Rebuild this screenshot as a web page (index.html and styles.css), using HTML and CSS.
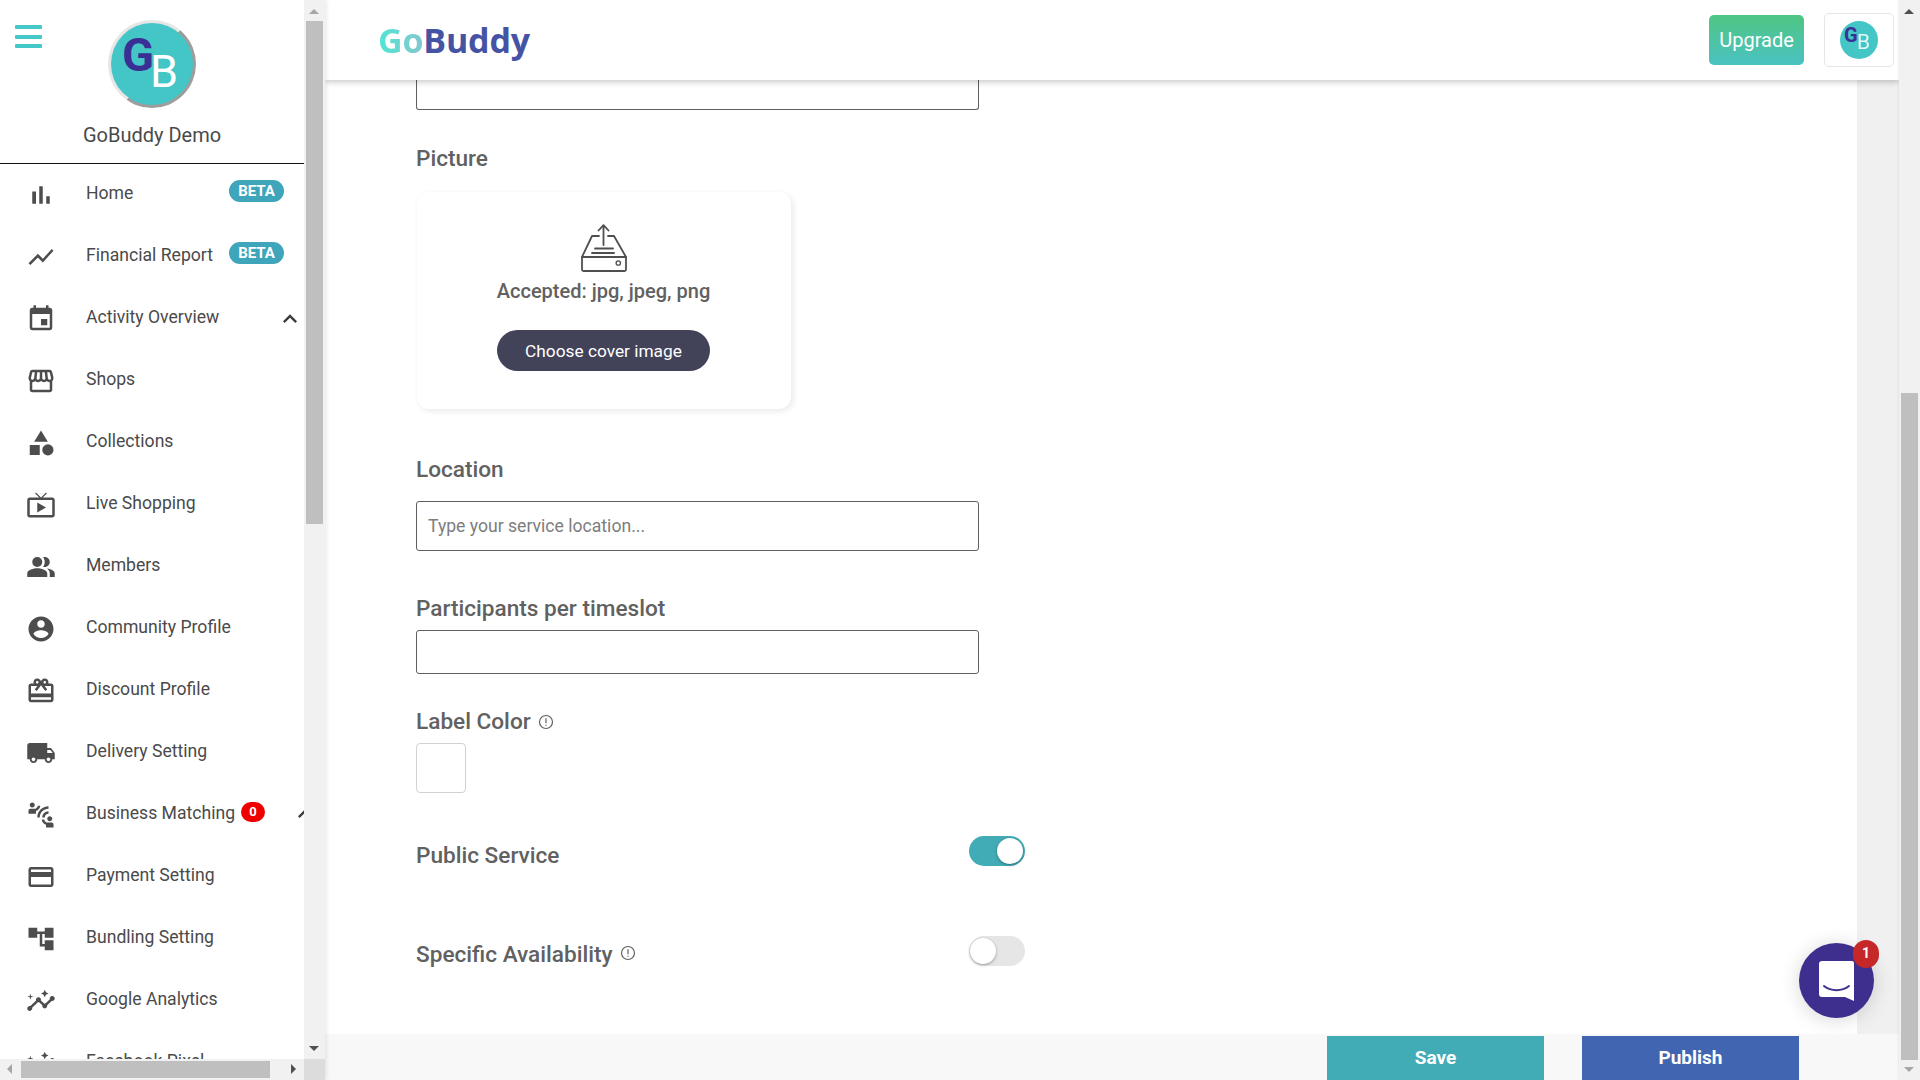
FILE: index.html
```html
<!DOCTYPE html>
<html lang="en">
<head>
<meta charset="utf-8">
<title>GoBuddy</title>
<link rel="stylesheet" href="styles.css">
</head>
<body>
<div class="app">
  <aside class="sidebar">
    <div class="side-top">
      <div class="side-content">
        <header class="profile">
          <button class="burger" aria-label="Menu"><i></i><i></i><i></i></button>
          <div class="ring"><div class="gb gb-large"><span class="g">G</span><span class="b">B</span></div></div>
          <div class="profile-name">GoBuddy Demo</div>
        </header>
        <nav class="nav">
          <a class="item"><svg class="ico" viewBox="0 0 24 24"><path d="M5 9.2h3V19H5zM10.6 5h2.8v14h-2.8zm5.6 8H19v6h-2.8z"/></svg><span>Home</span><b class="beta">BETA</b></a>
          <a class="item"><svg class="ico" viewBox="0 0 24 24"><path d="M3.5 18.49l6-6.01 4 4L22 6.92l-1.41-1.41-7.09 7.97-4-4L2 16.99z"/></svg><span>Financial Report</span><b class="beta">BETA</b></a>
          <a class="item"><svg class="ico" viewBox="0 0 24 24"><path d="M17 12h-5v5h5v-5zM16 1v2H8V1H6v2H5c-1.11 0-1.99.9-1.99 2L3 19c0 1.1.89 2 2 2h14c1.1 0 2-.9 2-2V5c0-1.1-.9-2-2-2h-1V1h-2zm3 18H5V8h14v11z"/></svg><span>Activity Overview</span><svg class="chev" viewBox="0 0 24 24"><path d="M12 8l-6 6 1.41 1.41L12 10.83l4.59 4.58L18 14z"/></svg></a>
          <a class="item"><svg class="ico" viewBox="0 0 24 24"><path d="M21.9 8.89l-1.05-4.37c-.22-.9-1-1.52-1.91-1.52H5.05c-.9 0-1.69.63-1.9 1.52L2.1 8.89c-.24 1.02-.02 2.06.62 2.88.08.11.19.19.28.29V19c0 1.1.9 2 2 2h14c1.1 0 2-.9 2-2v-6.94c.09-.09.2-.18.28-.28.64-.82.87-1.87.62-2.89zm-2.99-3.9l1.05 4.37c.1.42.01.84-.25 1.17-.14.18-.44.47-.94.47-.61 0-1.14-.49-1.21-1.14L16.98 5l1.93-.01zM13 5h1.96l.54 4.52c.05.39-.07.78-.33 1.07-.22.26-.54.41-.95.41-.67 0-1.22-.59-1.22-1.31V5zM8.49 9.52L9.04 5H11v4.69c0 .72-.55 1.31-1.29 1.31-.34 0-.65-.15-.89-.41-.25-.29-.37-.68-.33-1.07zm-4.45-.16L5.05 5h1.97l-.58 4.86c-.08.65-.6 1.14-1.21 1.14-.49 0-.8-.29-.93-.47-.27-.32-.36-.75-.26-1.17zM5 19v-6.03c.08.01.15.03.23.03.87 0 1.66-.36 2.24-.95.6.6 1.4.95 2.31.95.87 0 1.65-.36 2.23-.93.59.57 1.39.93 2.29.93.84 0 1.64-.35 2.24-.95.58.59 1.37.95 2.24.95.08 0 .15-.02.23-.03V19H5z"/></svg><span>Shops</span></a>
          <a class="item"><svg class="ico" viewBox="0 0 24 24"><path d="M12 2l-5.5 9h11zM3 13.5h8v8H3z"/><circle cx="17.5" cy="17.5" r="4.5"/></svg><span>Collections</span></a>
          <a class="item"><svg class="ico" viewBox="0 0 24 24"><path d="M21 6h-7.59l3.29-3.29L16 2l-4 4-4-4-.71.71L10.59 6H3c-1.1 0-2 .89-2 2v12c0 1.1.9 2 2 2h18c1.1 0 2-.9 2-2V8c0-1.11-.9-2-2-2zm0 14H3V8h18v12zM9 10v8l7-4z"/></svg><span>Live Shopping</span></a>
          <a class="item"><svg class="ico" viewBox="0 0 24 24"><path d="M16.67 13.13C18.04 14.06 19 15.32 19 17v3h4v-3c0-2.18-3.57-3.47-6.33-3.87zM15 12c2.21 0 4-1.79 4-4s-1.79-4-4-4c-.47 0-.91.1-1.33.24C14.5 5.27 15 6.58 15 8s-.5 2.73-1.33 3.76c.42.14.86.24 1.33.24zM9 13c-2.67 0-8 1.34-8 4v3h16v-3c0-2.66-5.33-4-8-4z"/><circle cx="9" cy="8" r="4"/></svg><span>Members</span></a>
          <a class="item"><svg class="ico" viewBox="0 0 24 24"><path d="M12 2C6.48 2 2 6.48 2 12s4.48 10 10 10 10-4.48 10-10S17.52 2 12 2zm0 3c1.66 0 3 1.34 3 3s-1.34 3-3 3-3-1.34-3-3 1.34-3 3-3zm0 14.2c-2.5 0-4.71-1.28-6-3.22.03-1.99 4-3.08 6-3.08 1.99 0 5.97 1.09 6 3.08-1.29 1.94-3.5 3.22-6 3.22z"/></svg><span>Community Profile</span></a>
          <a class="item"><svg class="ico" viewBox="0 0 24 24"><path d="M20 6h-2.18c.11-.31.18-.65.18-1 0-1.66-1.34-3-3-3-1.05 0-1.96.54-2.5 1.35l-.5.67-.5-.68C10.96 2.54 10.05 2 9 2 7.34 2 6 3.34 6 5c0 .35.07.69.18 1H4c-1.11 0-1.99.89-1.99 2L2 19c0 1.11.89 2 2 2h16c1.11 0 2-.89 2-2V8c0-1.11-.89-2-2-2zm-5-2c.55 0 1 .45 1 1s-.45 1-1 1-1-.45-1-1 .45-1 1-1zM9 4c.55 0 1 .45 1 1s-.45 1-1 1-1-.45-1-1 .45-1 1-1zm11 15H4v-2h16v2zm0-5H4V8h5.08L7 10.83 8.62 12 11 8.76l1-1.36 1 1.36L15.38 12 17 10.83 14.92 8H20v6z"/></svg><span>Discount Profile</span></a>
          <a class="item"><svg class="ico" viewBox="0 0 24 24"><path d="M20 8h-3V4H3c-1.1 0-2 .9-2 2v11h2c0 1.66 1.34 3 3 3s3-1.34 3-3h6c0 1.66 1.34 3 3 3s3-1.34 3-3h2v-5l-3-4zM6 18.5c-.83 0-1.5-.67-1.5-1.5s.67-1.5 1.5-1.5 1.5.67 1.5 1.5-.67 1.5-1.5 1.5zm13.5-9l1.96 2.5H17V9.5h2.5zm-1.5 9c-.83 0-1.5-.67-1.5-1.5s.67-1.5 1.5-1.5 1.5.67 1.5 1.5-.67 1.5-1.5 1.5z"/></svg><span>Delivery Setting</span></a>
          <a class="item"><svg class="ico" viewBox="0 0 24 24"><path d="M11 14H9c0-4.97 4.03-9 9-9v2c-3.87 0-7 3.13-7 7zm7-3V9c-2.76 0-5 2.24-5 5h2c0-1.66 1.34-3 3-3zM7 4c0-1.11-.89-2-2-2s-2 .89-2 2 .89 2 2 2 2-.89 2-2zm4.45.5h-2C9.21 5.92 7.99 7 6.5 7h-3C2.67 7 2 7.67 2 8.5V11h6V8.74c1.86-.59 3.25-2.27 3.45-4.24zM19 17c1.11 0 2-.89 2-2s-.89-2-2-2-2 .89-2 2 .89 2 2 2zm1.5 1h-3c-1.49 0-2.71-1.08-2.95-2.5h-2c.2 1.97 1.59 3.65 3.45 4.24V22h6v-2.5c0-.83-.67-1.5-1.5-1.5z"/></svg><span>Business Matching</span><b class="count">0</b><svg class="chev chev-cut" viewBox="0 0 24 24"><path d="M12 8l-6 6 1.41 1.41L12 10.83l4.59 4.58L18 14z"/></svg></a>
          <a class="item"><svg class="ico" viewBox="0 0 24 24"><path d="M20 4H4c-1.11 0-1.99.89-1.99 2L2 18c0 1.11.89 2 2 2h16c1.11 0 2-.89 2-2V6c0-1.11-.89-2-2-2zm0 14H4v-6h16v6zm0-10H4V6h16v2z"/></svg><span>Payment Setting</span></a>
          <a class="item"><svg class="ico" viewBox="0 0 24 24"><path d="M22 11V3h-7v3H9V3H2v8h7V8h2v10h4v3h7v-8h-7v3h-2V8h2v3z"/></svg><span>Bundling Setting</span></a>
          <a class="item"><svg class="ico" viewBox="0 0 24 24"><path d="M21 8c-1.45 0-2.26 1.44-1.93 2.51l-3.55 3.56c-.3-.09-.74-.09-1.04 0l-2.55-2.55C12.27 10.45 11.46 9 10 9c-1.45 0-2.27 1.44-1.93 2.52l-4.56 4.55C2.44 15.74 1 16.55 1 18c0 1.1.9 2 2 2 1.45 0 2.26-1.44 1.93-2.51l4.55-4.56c.3.09.74.09 1.04 0l2.55 2.55C12.73 16.55 13.54 18 15 18c1.45 0 2.27-1.44 1.93-2.52l3.56-3.55c1.07.33 2.51-.48 2.51-1.93 0-1.1-.9-2-2-2zM15 9l.94-2.07L18 6l-2.06-.93L15 3l-.92 2.07L12 6l2.08.93zM3.5 11L4 9l2-.5L4 8l-.5-2L3 8l-2 .5L3 9z"/></svg><span>Google Analytics</span></a>
          <a class="item"><svg class="ico" viewBox="0 0 24 24"><path d="M21 8c-1.45 0-2.26 1.44-1.93 2.51l-3.55 3.56c-.3-.09-.74-.09-1.04 0l-2.55-2.55C12.27 10.45 11.46 9 10 9c-1.45 0-2.27 1.44-1.93 2.52l-4.56 4.55C2.44 15.74 1 16.55 1 18c0 1.1.9 2 2 2 1.45 0 2.26-1.44 1.93-2.51l4.55-4.56c.3.09.74.09 1.04 0l2.55 2.55C12.73 16.55 13.54 18 15 18c1.45 0 2.27-1.44 1.93-2.52l3.56-3.55c1.07.33 2.51-.48 2.51-1.93 0-1.1-.9-2-2-2zM15 9l.94-2.07L18 6l-2.06-.93L15 3l-.92 2.07L12 6l2.08.93zM3.5 11L4 9l2-.5L4 8l-.5-2L3 8l-2 .5L3 9z"/></svg><span>Facebook Pixel</span></a>
        </nav>
      </div>
      <div class="vbar">
        <i class="arr arr-up arr-gray"></i>
        <div class="vthumb vthumb-side"></div>
        <i class="arr arr-down arr-dark"></i>
      </div>
    </div>
    <div class="hbar">
      <div class="htrack">
        <i class="arr arr-left arr-gray"></i>
        <div class="hthumb"></div>
        <i class="arr arr-right arr-dark"></i>
      </div>
      <div class="corner"></div>
    </div>
  </aside>

  <main class="main">
    <header class="topbar">
      <div class="brand"><span class="brand-go">Go</span><span class="brand-buddy">Buddy</span></div>
      <div class="top-actions">
        <button class="upgrade">Upgrade</button>
        <div class="avatar-box"><div class="gb gb-small"><span class="g">G</span><span class="b">B</span></div></div>
      </div>
    </header>
    <div class="body">
      <form class="form">
        <div class="input input-cut"></div>
        <div class="label label-picture">Picture</div>
        <div class="card">
          <svg class="upload" viewBox="0 0 47 48" fill="none" stroke="#4f4f4f" stroke-width="1.800" stroke-linejoin="round" stroke-linecap="round">
            <path d="M23.500 21V1.500M18.500 6.500L23.500 1.200 28.500 6.500"/>
            <path d="M19 12h-7L2 33v12.500c0 .8.7 1.500 1.500 1.500h41c.8 0 1.500-.7 1.500-1.500V33L34 12h-6"/>
            <path d="M2 33h44M12 29h22M15 24.500h18"/>
            <circle cx="38.300" cy="39" r="2.200" stroke-width="1.300"/>
          </svg>
          <div class="accepted">Accepted: jpg, jpeg, png</div>
          <button type="button" class="choose">Choose cover image</button>
        </div>
        <div class="label label-location">Location</div>
        <div class="input input-location">Type your service location...</div>
        <div class="label label-part">Participants per timeslot</div>
        <div class="input input-part"></div>
        <div class="label label-color">Label Color <svg class="info info-color" viewBox="0 0 16 16"><circle cx="8" cy="8" r="6.500"/><path d="M8 4.300v4.900M8 10.800v1"/></svg></div>
        <div class="swatch"></div>
        <div class="row row-public">
          <div class="label">Public Service</div>
          <div class="toggle toggle-on"><i></i></div>
        </div>
        <div class="row row-specific">
          <div class="label">Specific Availability <svg class="info info-specific" viewBox="0 0 16 16"><circle cx="8" cy="8" r="6.500"/><path d="M8 4.300v4.900M8 10.800v1"/></svg></div>
          <div class="toggle toggle-off"><i></i></div>
        </div>
      </form>
      <div class="strip"></div>
      <button class="chat" aria-label="Chat">
        <svg class="chat-ico" viewBox="0 0 35 40"><path d="M3 0h30a2 2 0 0 1 2 2v38l-9-4H3a3 3 0 0 1-3-3V3a3 3 0 0 1 3-3z" fill="#fff"/><path d="M5 25c7 5.500 18 5.500 25 0" fill="none" stroke="#3e2f8f" stroke-width="2" stroke-linecap="round"/></svg>
        <b class="chat-count">1</b>
      </button>
    </div>
    <footer class="footer">
      <button class="action action-save">Save</button>
      <button class="action action-publish">Publish</button>
    </footer>
  </main>

  <div class="pagebar vbar">
    <i class="arr arr-up arr-dark"></i>
    <div class="vthumb vthumb-page"></div>
    <i class="arr arr-down arr-gray"></i>
  </div>
</div>
</body>
</html>
```
FILE: styles.css
```css
* { box-sizing: border-box; }
html, body { margin: 0; height: 100%; overflow: hidden; }
body { font-family: Roboto, "Liberation Sans", sans-serif; color: #4a4a4a; background: #fff; }
button { font-family: inherit; border: 0; padding: 0; }

.app { display: flex; height: 1080px; width: 1920px; }

/* Sidebar */
.sidebar { width: 325px; flex: none; display: flex; flex-direction: column; background: #fff; box-shadow: 2px 0 4px rgba(0,0,0,.08); position: relative; z-index: 3; }
.side-top { flex: 1; display: flex; min-height: 0; }
.side-content { width: 304px; flex: none; overflow: hidden; }
.profile { height: 164px; border-bottom: 1px solid #111; display: flex; flex-direction: column; align-items: center; position: relative; padding-top: 20px; }
.burger { position: absolute; left: 15px; top: 25px; width: 27px; height: 23px; background: none; display: flex; flex-direction: column; justify-content: space-between; }
.burger i { display: block; height: 4px; width: 100%; background: #45c8c8; border-radius: 1px; }
.ring { width: 88px; height: 88px; border-radius: 50%; padding: 3px; background: conic-gradient(from 40deg, #9d9d9d 0 175deg, #e6e6e6 175deg 360deg); }
.gb { border-radius: 50%; background: #45c6c6; position: relative; width: 100%; height: 100%; overflow: hidden; font-family: Roboto, sans-serif; }
.gb span { position: absolute; line-height: 1; }
.g { color: #3a2f94; font-weight: 700; }
.b { color: #fff; font-weight: 400; }
.gb-large .g { font-size: 47px; left: 11px; top: 8px; }
.gb-large .b { font-size: 45px; left: 39px; top: 26px; }
.profile-name { margin-top: 15px; font-size: 20px; line-height: 25px; color: #4a4a4a; }

.nav { display: flex; flex-direction: column; }
.item { height: 62px; flex: none; display: flex; align-items: flex-start; padding: 16px 0 0 26px; font-size: 17.6px; line-height: 24px; color: #4a4a4a; overflow: hidden; }
.item span { margin-top: 1px; }
.ico { width: 30px; height: 30px; flex: none; fill: #4d4d4d; margin-right: 30px; }
.beta { margin-left: auto; margin-right: 20px; width: 55px; height: 22px; border-radius: 11px; background: #3fa5bb; color: #fff; font-size: 15px; font-weight: 700; line-height: 22px; text-align: center; }
.count { margin-left: 6px; margin-top: 2px; width: 24px; height: 20px; border-radius: 10px; background: #ee0000; color: #fff; font-size: 13px; font-weight: 700; line-height: 20px; text-align: center; }
.chev { width: 28px; height: 28px; flex: none; fill: #3c3c3c; margin-left: auto; margin-right: 0; margin-top: 1px; }
.chev-cut { margin-right: -15px; margin-top: 0; }

/* Scrollbars */
.vbar { width: 21px; flex: none; background: #f1f1f1; display: flex; flex-direction: column; align-items: center; position: relative; }
.vthumb { width: 17px; background: #bfbfbf; }
.vthumb-side { margin-top: 21px; height: 503px; }
.vthumb-page { margin-top: auto; height: 667px; margin-bottom: 20px; }
.arr { position: absolute; width: 0; height: 0; border-style: solid; border-color: transparent; }
.arr-up { top: 9px; left: 5px; border-width: 0 5px 5px 5px; }
.arr-down { bottom: 8px; left: 5px; border-width: 5px 5px 0 5px; }
.arr-left { left: 7px; top: 5px; border-width: 5px 5px 5px 0; }
.arr-right { right: 8px; top: 5px; border-width: 5px 0 5px 5px; }
.arr-up.arr-gray { border-bottom-color: #a6a6a6; }
.arr-up.arr-dark { border-bottom-color: #505050; }
.arr-down.arr-gray { border-top-color: #a6a6a6; }
.arr-down.arr-dark { border-top-color: #505050; }
.arr-left.arr-gray { border-right-color: #a6a6a6; }
.arr-right.arr-dark { border-left-color: #505050; }
.hbar { height: 21px; flex: none; display: flex; }
.htrack { width: 304px; background: #f1f1f1; position: relative; display: flex; align-items: center; padding-left: 21px; }
.hthumb { width: 249px; height: 17px; background: #bfbfbf; }
.corner { flex: 1; background: #dcdcdc; }
.pagebar { box-shadow: -1px 0 2px rgba(0,0,0,.06); position: relative; z-index: 2; }

/* Main */
.main { flex: 1; min-width: 0; display: flex; flex-direction: column; position: relative; }
.topbar { height: 80px; flex: none; background: #fff; box-shadow: 0 2px 6px rgba(0,0,0,.22); position: relative; z-index: 2; display: flex; align-items: center; padding: 0 5px 0 53px; justify-content: space-between; }
.brand { font-family: "Open Sans", sans-serif; font-weight: 700; font-size: 34px; line-height: 1; letter-spacing: -.2px; margin-top: -1px; }
.brand-go { background: linear-gradient(90deg, #50e6d4, #85c6cc); -webkit-background-clip: text; background-clip: text; color: transparent; }
.brand-buddy { color: #4553a5; }
.top-actions { display: flex; align-items: center; gap: 20px; }
.upgrade { width: 95px; height: 50px; border-radius: 5px; background: linear-gradient(180deg, #50c583, #4ac2c2); color: #fff; font-size: 20px; }
.avatar-box { width: 70px; height: 54px; border: 1px solid #e6e6e6; border-radius: 5px; display: flex; align-items: center; justify-content: center; }
.gb-small { width: 38px; height: 38px; flex: none; }
.gb-small .g { font-size: 20px; left: 4px; top: 4px; }
.gb-small .b { font-size: 21px; left: 17px; top: 11px; opacity: .85; }

.body { flex: 1; min-height: 0; display: flex; position: relative; }
.form { flex: 1; padding-left: 91px; min-width: 0; }
.strip { width: 42px; flex: none; background: #f0f0f0; }

.label { font-size: 22.6px; line-height: 25px; height: 26px; font-weight: 500; color: #616161; }
.input { width: 563px; border: 1px solid #5f5f5f; border-radius: 3px; background: #fff; }
.input-cut { height: 30px; border-top: 0; border-radius: 0 0 3px 3px; }
.label-picture { margin-top: 36px; }
.card { margin-top: 20px; margin-left: 1px; width: 374px; height: 217px; border-radius: 12px; background: #fff; box-shadow: 2px 2px 6px rgba(0,0,0,.09); display: flex; flex-direction: column; align-items: center; padding: 32px 1px 0 0; }
.upload { width: 47px; height: 48px; display: block; }
.accepted { margin-top: 6px; font-size: 20px; line-height: 26px; font-weight: 500; color: #616161; }
.choose { margin-top: 26px; width: 213px; height: 41px; border-radius: 21px; background: #424259; color: #fff; font-size: 17.3px; }
.label-location { margin-top: 48px; }
.input-location { margin-top: 18px; height: 50px; padding-left: 11px; font-size: 17.6px; line-height: 48px; color: #7d7d7d; }
.label-part { margin-top: 45px; }
.input-part { margin-top: 8px; height: 44px; }
.label-color { margin-top: 35px; display: flex; align-items: flex-start; gap: 7px; }
.info { width: 16px; height: 16px; fill: none; stroke: #616161; stroke-width: 1.2; flex: none; }
.info-color { margin-top: 5px; }
.info-specific { margin-top: 3px; }
.swatch { margin-top: 8px; width: 50px; height: 50px; border: 1px solid #d2d2d2; border-radius: 4px; background: #fff; }
.row { width: 609px; display: flex; justify-content: space-between; align-items: flex-start; }
.row .label { display: flex; align-items: flex-start; gap: 7px; }
.row-public { margin-top: 43px; height: 38px; }
.row-public .label { margin-top: 7px; }
.row-specific { margin-top: 62px; height: 36px; }
.row-specific .label { margin-top: 6px; }
.toggle { width: 56px; height: 30px; border-radius: 15px; position: relative; flex: none; }
.toggle i { position: absolute; top: 2px; width: 26px; height: 26px; border-radius: 50%; background: #fff; box-shadow: 0 1px 3px rgba(0,0,0,.35); }
.toggle-on { background: #42acb6; }
.toggle-on i { right: 2px; }
.toggle-off { background: #e6e6e6; }
.toggle-off i { left: 1px; }

.chat { position: absolute; left: 1474px; top: 863px; width: 75px; height: 75px; border-radius: 50%; background: #3e2f8f; box-shadow: 0 2px 20px rgba(0,0,0,.16); }
.chat-ico { position: absolute; left: 20px; top: 18px; width: 35px; height: 40px; }
.chat-count { position: absolute; left: 54px; top: -3px; width: 26px; height: 28px; border-radius: 13px; background: #c62828; color: #fff; font-size: 14px; line-height: 27px; font-weight: 700; text-align: center; }

.footer { height: 46px; flex: none; background: #f8f8f8; display: flex; align-items: flex-end; padding-left: 1002px; gap: 38px; position: relative; z-index: 1; }
.action { width: 217px; height: 44px; color: #fff; font-size: 19px; font-weight: 700; padding-bottom: 1px; }
.action-save { background: #42acb6; }
.action-publish { background: #4265b1; }
```
